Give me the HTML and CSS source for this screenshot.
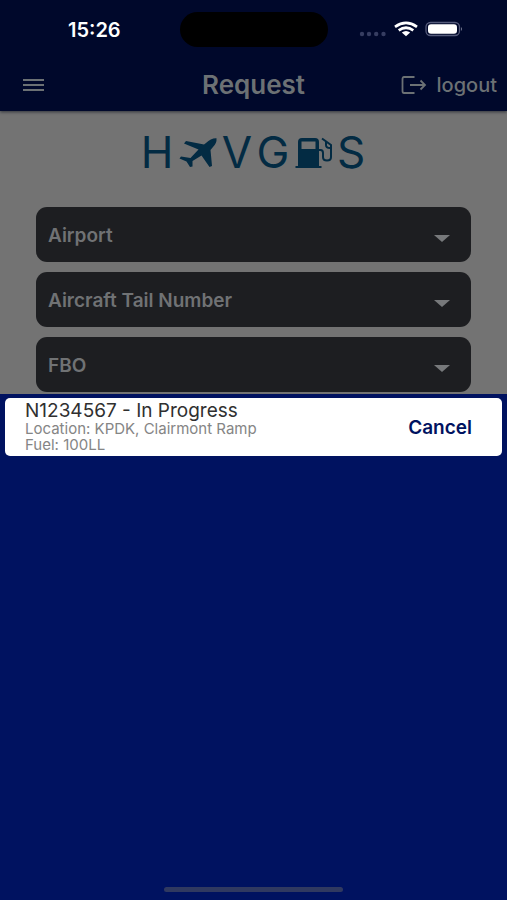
FILE: index.html
```html
<!DOCTYPE html>
<html lang="en">
<head>
<meta charset="utf-8">
<meta name="viewport" content="width=device-width, initial-scale=1">
<title>Request</title>
<link rel="stylesheet" href="styles.css">
</head>
<body>
<header class="top">
  <div class="status">
    <time class="clock">15:26</time>
    <div class="island"></div>
    <svg class="signals" width="104" height="20" viewBox="0 0 104 20" aria-hidden="true">
      <g fill="#363d61"><circle cx="3" cy="14" r="2.2"/><circle cx="10" cy="14" r="2.2"/><circle cx="17.200" cy="14" r="2.200"/><circle cx="24.500" cy="14" r="2.200"/></g>
      <g fill="none" stroke="#fff" stroke-width="2.700"><path d="M36 6.800Q47 -1 58 6.800"/><path d="M39.700 10.300Q47 5.200 54.300 10.300"/></g>
      <path d="M42.800 12.500Q47 9.400 51.200 12.500L47 16.200Z" fill="#fff"/>
      <rect x="67" y="2.500" width="33.500" height="13" rx="4.500" fill="none" stroke="#555b7b" stroke-width="1.300"/>
      <rect x="69" y="4.300" width="29" height="9.500" rx="3" fill="#fff"/>
      <path d="M102 7Q104 9 102 11Z" fill="#737991"/>
    </svg>
  </div>
  <nav class="bar">
    <button class="menu" type="button" aria-label="Menu">
      <svg width="22" height="14" viewBox="0 0 22 14"><path d="M0 2H21M0 7H21M0 12H21" stroke="#6c7174" stroke-width="2"/></svg>
    </button>
    <h1 class="title">Request</h1>
    <button class="logout" type="button">
      <svg width="26" height="20" viewBox="0 0 26 20" fill="none" stroke="#6c7174" stroke-width="1.800"><path d="M13.500 2H3Q1.500 2 1.500 4V16Q1.500 18 3 18H13.500M9 10H24M19.500 5.500L24 10L19.500 14.500"/></svg>
      <span>logout</span>
    </button>
  </nav>
</header>
<main class="request">
  <svg class="logo" width="228" height="56" viewBox="0 -8 228 56" role="img" aria-label="HAVGAS">
    <g class="letters"><text x="17" y="36">H</text><text x="97" y="36">V</text><text x="133" y="36">G</text><text x="211" y="36">S</text></g>
    <path fill="#032b43" d="M76.500 6.300Q71 6 66 11L64 12.500L46 9L44 11.500L58.500 17.500L50.500 26L41 24.500L39.500 26.500L46.500 29.500L50 35L52.500 34.500L52.500 29L61.500 23.500L69.500 35L72 34L70.500 18L73 15Q77 11 76.500 6.300Z"/>
    <path fill="#032b43" fill-rule="evenodd" d="M158 34V10Q158 6 162 6H175Q179 6 179 10V34H181.500V36H155.500V34ZM161.500 9.500V17H175.500V9.500Z"/>
    <path fill="none" stroke="#032b43" stroke-width="2" d="M179 18H180.500Q183 18 183 21V25Q183 28.500 187 28.500Q191 28.500 191 25V13L182 6.500M186 9.500V13Q186 16 190 16"/>
  </svg>
  <form class="fields">
    <label class="field"><select aria-label="Airport"><option>Airport</option></select><span class="caret"></span></label>
    <label class="field"><select aria-label="Aircraft Tail Number"><option>Aircraft Tail Number</option></select><span class="caret"></span></label>
    <label class="field"><select aria-label="FBO"><option>FBO</option></select><span class="caret"></span></label>
  </form>
</main>
<section class="sheet">
  <article class="card">
    <div class="details">
      <h2>N1234567 - In Progress</h2>
      <p>Location: KPDK, Clairmont Ramp</p>
      <p>Fuel: 100LL</p>
    </div>
    <button class="cancel" type="button">Cancel</button>
  </article>
  <div class="home"></div>
</section>
</body>
</html>
```
FILE: styles.css
```css
* { box-sizing: border-box; }
body {
  margin: 0;
  min-height: 100vh;
  display: flex;
  flex-direction: column;
  background: #737373;
  font-family: Inter, "Liberation Sans", sans-serif;
}
button, select { font: inherit; border: 0; padding: 0; background: none; }
h1, h2, p { margin: 0; font-weight: 400; }
svg { display: block; }

.top { background: #00082b; box-shadow: 0 1px 3px #30343c; }
.status {
  height: 59px;
  padding: 0 44px;
  display: grid;
  grid-template-columns: 1fr 148px 1fr;
  align-items: center;
}
.clock { padding-left: 24px; color: #fff; font-size: 20px; font-weight: 600; }
.island { height: 35px; border-radius: 18px; background: #000; }
.signals { justify-self: end; }
.bar {
  height: 52px;
  padding: 0 10px;
  display: grid;
  grid-template-columns: 1fr auto 1fr;
  align-items: center;
  color: #6c7174;
}
.menu { justify-self: start; margin-left: 13px; }
.title { font-size: 26px; line-height: 28px; font-weight: 600; }
.logout {
  justify-self: end;
  display: flex;
  align-items: center;
  gap: 10px;
  color: inherit;
  font-size: 20px;
  font-weight: 500;
}

.request { padding: 13px 36px 2px; }
.logo { margin: 0 auto 27px; }
.letters { fill: #032b43; font-size: 44px; font-weight: 400; text-anchor: middle; }
.fields { display: grid; gap: 10px; }
.field { display: grid; align-items: center; }
.field > * { grid-area: 1 / 1; }
.field select {
  appearance: none;
  width: 100%;
  height: 55px;
  padding: 2px 12px 0;
  border-radius: 11px;
  background: #1d1e21;
  color: #707274;
  font-size: 19px;
  font-weight: 600;
}
.caret {
  justify-self: end;
  margin: 8px 21px 0 0;
  border: solid transparent;
  border-width: 7px 8px 0;
  border-top-color: #77797b;
  pointer-events: none;
}

.sheet {
  flex: 1;
  display: flex;
  flex-direction: column;
  padding: 4px 5px 8px;
  background: #001260;
}
.card {
  display: flex;
  align-items: center;
  justify-content: space-between;
  padding: 3px 30px 3px 20px;
  border-radius: 5px;
  background: #fff;
}
.details h2 { color: #303030; font-size: 19px; line-height: 20px; }
.details p { color: #858585; font-size: 15px; line-height: 16px; }
.cancel { color: #001260; font-size: 19px; font-weight: 600; }
.home {
  width: 36%;
  height: 5px;
  margin: auto auto 0;
  border-radius: 3px;
  background: #303960;
}
```
